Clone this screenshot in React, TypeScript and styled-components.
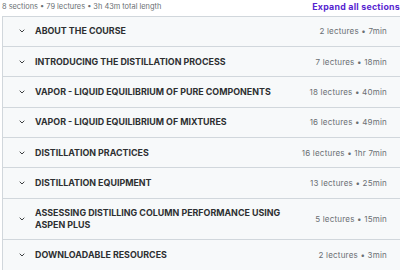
import React from "react";
import styled, { createGlobalStyle } from "styled-components";

type Section = {
  title: string
  lectures: number
  length: string
};

const sections: Section[] = [
  { title: "About the course", lectures: 2, length: "7min" },
  { title: "Introducing the distillation process", lectures: 7, length: "18min" },
  { title: "Vapor - liquid equilibrium of pure components", lectures: 18, length: "40min" },
  { title: "Vapor - liquid equilibrium of mixtures", lectures: 16, length: "49min" },
  { title: "Distillation practices", lectures: 16, length: "1hr 7min" },
  { title: "Distillation equipment", lectures: 13, length: "25min" },
  { title: "Assessing distilling column performance using Aspen Plus", lectures: 5, length: "15min" },
  { title: "Downloadable resources", lectures: 2, length: "3min" },
];

const GlobalStyle = createGlobalStyle`
  body {
    margin: 0;
    background: #ffffff;
    overflow: hidden;
    font-family: Inter, "Liberation Sans", sans-serif;
  }
`;

const Chevron = () => (
  <svg width="6" height="4" viewBox="0 0 6 4">
    <path d="M0.7 0.7 L3 3 L5.3 0.7" fill="none" stroke="#3e4143" strokeWidth="1" />
  </svg>
);

const App: React.FC = () => {
  return (
    <Page>
      <GlobalStyle />
      <Header>
        <Summary>8 sections • 79 lectures • 3h 43m total length</Summary>
        <ExpandAll>Expand all sections</ExpandAll>
      </Header>
      <Panel>
        {sections.map((s) => (
          <Row key={s.title}>
            <ChevronBox>
              <Chevron />
            </ChevronBox>
            <Title>{s.title}</Title>
            <Meta>{s.lectures} lectures • {s.length}</Meta>
          </Row>
        ))}
      </Panel>
    </Page>
  );
};

export default App;

const Page = styled.div`
  width: 399px;
  padding-left: 2px;
`;

const Header = styled.div`
  display: flex;
  justify-content: space-between;
  align-items: center;
  height: 12px;
  margin-bottom: 3.5px;
  padding-right: 1px;
`;

const Summary = styled.div`
  font-size: 7.4px;
  color: #6a6f73;
`;

const ExpandAll = styled.div`
  font-size: 8.8px;
  letter-spacing: 0.25px;
  font-weight: 700;
  color: #5624d0;
`;

const Panel = styled.div`
  border: 1px solid #d1d7dc;
  border-right: none;
`;

const Row = styled.div`
  display: flex;
  align-items: center;
  box-sizing: border-box;
  min-height: 30.4px;
  padding: 8px 14px 8px 16px;
  background: #f7f9fa;
  border-bottom: 1px solid #d1d7dc;

  &:last-child {
    border-bottom: none;
  }
`;

const ChevronBox = styled.div`
  display: flex;
  align-items: center;
  width: 16px;
  flex-shrink: 0;
`;

const Title = styled.div`
  flex: 1;
  max-width: 255px;
  font-size: 8.9px;
  line-height: 12px;
  font-weight: 700;
  color: #2d2f31;
  text-transform: uppercase;
`;

const Meta = styled.div`
  margin-left: auto;
  font-size: 8px;
  letter-spacing: 0.2px;
  color: #6a6f73;
  white-space: nowrap;
`;
